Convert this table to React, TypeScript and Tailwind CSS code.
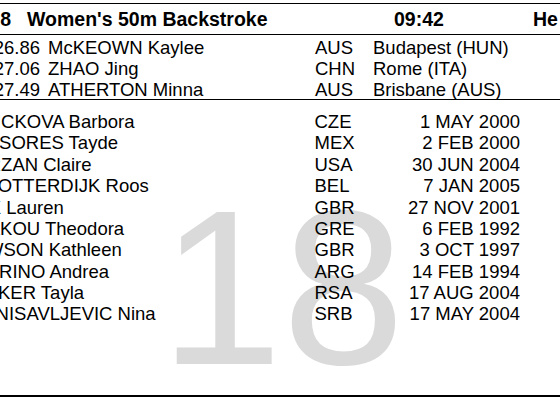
const records = [
  { time: "26.86", name: "McKEOWN Kaylee", noc: "AUS", place: "Budapest (HUN)" },
  { time: "27.06", name: "ZHAO Jing", noc: "CHN", place: "Rome (ITA)" },
  { time: "27.49", name: "ATHERTON Minna", noc: "AUS", place: "Brisbane (AUS)" },
];

const entries = [
  { name: "JANICKOVA Barbora", noc: "CZE", born: "1 MAY 2000" },
  { name: "SANSORES Tayde", noc: "MEX", born: "2 FEB 2000" },
  { name: "CURZAN Claire", noc: "USA", born: "30 JUN 2004" },
  { name: "VANOTTERDIJK Roos", noc: "BEL", born: "7 JAN 2005" },
  { name: "COX Lauren", noc: "GBR", born: "27 NOV 2001" },
  { name: "DRAKOU Theodora", noc: "GRE", born: "6 FEB 1992" },
  { name: "DAWSON Kathleen", noc: "GBR", born: "3 OCT 1997" },
  { name: "BERRINO Andrea", noc: "ARG", born: "14 FEB 1994" },
  { name: "JONKER Tayla", noc: "RSA", born: "17 AUG 2004" },
  { name: "STANISAVLJEVIC Nina", noc: "SRB", born: "17 MAY 2004" },
];

export default function App() {
  return (
    <div className="relative w-[560px] h-[402px] overflow-hidden bg-white text-black font-['Liberation_Sans',Arial,sans-serif]">
      {/* heat number watermark */}
      <div className="absolute left-[160px] top-[178px] text-[220px] leading-none text-[#dadada] select-none">
        18
      </div>

      <div className="relative ml-[-60px] w-[680px] pt-[3px]">
        <div className="flex flex-col h-[394px] border-t border-b-2 border-black">
          <div className="flex h-[31px] items-start leading-[30px] text-[19.5px] font-bold border-b border-black whitespace-nowrap">
            <span className="w-[71px] text-right">18</span>
            <span className="ml-[16px] w-[367px]">Women's 50m Backstroke</span>
            <span className="w-[139px]">09:42</span>
            <span>He</span>
          </div>

          <div className="h-[65px] pt-[1.5px] border-b border-black text-[18.5px] leading-[21.35px] whitespace-nowrap">
            {records.map((r) => (
              <div key={r.time} className="flex">
                <span className="w-[100px] text-right">{r.time}</span>
                <span className="ml-[8px] w-[267px]">{r.name}</span>
                <span className="w-[58px]">{r.noc}</span>
                <span>{r.place}</span>
              </div>
            ))}
          </div>

          <div className="mt-[11px] text-[18.5px] leading-[21.37px] whitespace-nowrap">
            {entries.map((e) => (
              <div key={e.name} className="flex">
                <span className="ml-[21px] w-[353.5px] shrink-0">{e.name}</span>
                <span className="w-[60px] shrink-0">{e.noc}</span>
                <span className="w-[145.5px] shrink-0 text-right">{e.born}</span>
              </div>
            ))}
          </div>
        </div>
      </div>
    </div>
  );
}
